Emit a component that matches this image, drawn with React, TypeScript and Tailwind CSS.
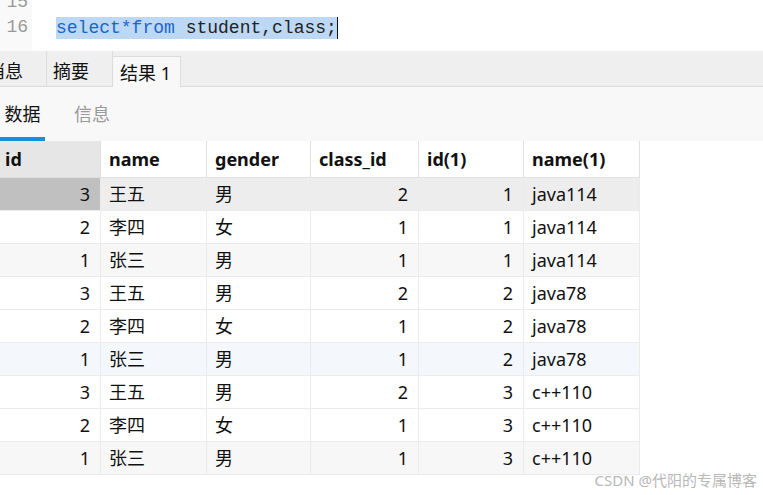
import React from 'react';

const cols = ['id', 'name', 'gender', 'class_id', 'id(1)', 'name(1)'];

// rows of the query result
const rows = [
  ['3', '王五', '男', '2', '1', 'java114'],
  ['2', '李四', '女', '1', '1', 'java114'],
  ['1', '张三', '男', '1', '1', 'java114'],
  ['3', '王五', '男', '2', '2', 'java78'],
  ['2', '李四', '女', '1', '2', 'java78'],
  ['1', '张三', '男', '1', '2', 'java78'],
  ['3', '王五', '男', '2', '3', 'c++110'],
  ['2', '李四', '女', '1', '3', 'c++110'],
  ['1', '张三', '男', '1', '3', 'c++110'],
];

const rowBg = [
  'bg-[#ededed]',
  'bg-white',
  'bg-[#f7f7f7]',
  'bg-white',
  'bg-white',
  'bg-[#f4f8fc]',
  'bg-white',
  'bg-white',
  'bg-[#f7f7f7]',
];

const numeric = [true, false, false, true, true, false];

const App: React.FC = () => {
  return (
    <div
      className="relative w-[763px] h-[495px] overflow-hidden bg-white text-[#111]"
      style={{ fontFamily: '"Noto Sans", "Noto Sans CJK SC", sans-serif' }}
    >
      {/* Editor */}
      <div className="flex h-[51px] overflow-hidden">
        <div className="w-[32px] bg-[#f9f9f9] flex flex-col justify-end pb-[11px] shrink-0">
          {['15', '16'].map((n) => (
            <div
              key={n}
              className="h-[25px] shrink-0 flex items-center justify-end pr-[4px] text-[18px] text-[#999]"
              style={{ fontFamily: '"Liberation Mono", monospace' }}
            >
              {n}
            </div>
          ))}
        </div>
        <div className="flex-1 flex flex-col justify-end pb-[11px] pl-[24px]">
          <div
            className="h-[25px] flex items-center text-[18px]"
            style={{ fontFamily: '"Liberation Mono", monospace' }}
          >
            <span className="bg-[#bcd8f5] leading-[22px] border-r border-[#111]">
              <span className="text-[#1a66c8]">select*from</span>
              <span className="text-[#222]"> student,class;</span>
            </span>
          </div>
        </div>
      </div>

      {/* Result tabs */}
      <div className="h-[36px] bg-[#efefef] border-b border-[#dcdcdc] flex items-end text-[18px]">
        <div className="h-[35px] w-[47px] border-r border-[#dcdcdc] flex items-center justify-end pr-[23px] pt-[5px] overflow-hidden">
          <span className="whitespace-nowrap">消息</span>
        </div>
        <div className="h-[35px] w-[66px] border-r border-[#dcdcdc] flex items-center pl-[6px] pt-[5px]">
          摘要
        </div>
        <div className="h-[31px] w-[68px] bg-[#f8f8f8] border-r border-t border-[#dcdcdc] -mb-px flex items-center pl-[7px] pt-[2px]">
          结果 1
        </div>
      </div>

      {/* Data / Info switch */}
      <div className="h-[54px] bg-[#f8f8f8] flex items-end text-[18px]">
        <div className="w-[45px] h-[44px] flex flex-col items-center justify-between">
          <span className="leading-[34px]">数据</span>
          <div className="h-[4px] w-full bg-[#1a8fd6]" />
        </div>
        <div className="ml-[29px] h-[44px] text-[#999]">
          <span className="leading-[34px] block">信息</span>
        </div>
        <div className="h-[10px]" />
      </div>

      {/* Grid */}
      <div className="w-[640px] grid grid-cols-[101px_106px_104px_108px_105px_116px] text-[18px]">
        {cols.map((c, i) => (
          <div
            key={c}
            className={`h-[37px] flex items-center font-bold border-r border-b border-[#e0e0e0] ${
              i === 0 ? 'bg-[#e6e6e6] pl-[5px]' : 'bg-white pl-[8px]'
            }`}
          >
            {c}
          </div>
        ))}
        {rows.map((r, ri) =>
          r.map((v, ci) => (
            <div
              key={`${ri}-${ci}`}
              className={`h-[33px] flex items-center border-r border-b border-[#ebebeb] ${
                numeric[ci] ? 'justify-end pr-[10px]' : 'pl-[8px]'
              } ${ri === 0 && ci === 0 ? 'bg-[#c0c0c0]' : rowBg[ri]}`}
            >
              {v}
            </div>
          ))
        )}
      </div>

      {/* Watermark */}
      <div className="absolute right-[6px] bottom-[4px] text-[15px] text-[#b8b8b8]">
        CSDN @代阳的专属博客
      </div>
    </div>
  );
};

export default App;
